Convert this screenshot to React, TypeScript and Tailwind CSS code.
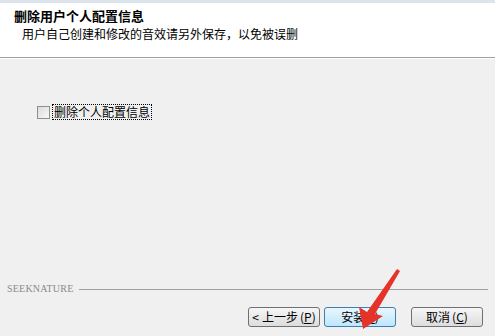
import React from 'react';

const cjk = { fontFamily: '"Noto Sans CJK SC", "Liberation Sans", sans-serif' };

function WizardButton({ label, hotkey, prefix, primary }: { label: string; hotkey: string; prefix?: string; primary?: boolean }) {
  return (
    <button
      className={
        primary
          ? 'flex h-[20px] w-[72px] items-center justify-center rounded-[3px] border border-[#3c7fb1] bg-gradient-to-b from-[#eaf6fd] to-[#bee6fd] text-[12px] text-black'
          : 'flex h-[20px] w-[72px] items-center justify-center rounded-[3px] border border-[#707070] bg-gradient-to-b from-[#f6f6f6] to-[#dddddd] text-[12px] text-black'
      }
      style={cjk}
    >
      {prefix && <span className="mr-[3px]">{prefix}</span>}
      <span>{label}</span>
      <span className="ml-[2px]">
        (<span className="underline">{hotkey}</span>)
      </span>
    </button>
  );
}

export default function App() {
  return (
    <div className="relative flex h-[336px] w-[495px] flex-col overflow-hidden bg-[#f0f0f0]" style={cjk}>
      <div className="h-[3px] bg-[#dce5ee]" />
      <header className="flex h-[54px] flex-col bg-white pl-[14px] pt-[5px]">
        <p className="text-[13px] font-bold leading-[16px] text-black">删除用户个人配置信息</p>
        <p className="ml-[8px] mt-[2px] text-[12px] leading-[16px] text-black">用户自己创建和修改的音效请另外保存，以免被误删</p>
      </header>
      <div className="h-px bg-[#a0a0a0]" />
      <div className="h-px bg-white" />

      <main className="flex-1 pl-[37px] pt-[45px]">
        <label className="flex items-center gap-[2px]">
          <span className="h-[13px] w-[13px] border border-[#8e8f8f] bg-gradient-to-br from-[#dcdcdc] to-[#f8f8f8]" />
          <span className="border border-dotted border-black px-[1px] text-[12px] leading-[14px] text-black">删除个人配置信息</span>
        </label>
      </main>

      <div className="flex items-center pl-[7px] pr-[7px]">
        <span className="text-[10px] leading-[12px] tracking-[0.2px] text-[#8a8a8a]" style={{ fontFamily: '"Liberation Serif", serif' }}>
          SEEKNATURE
        </span>
        <div className="ml-[6px] h-px flex-1 bg-[#a0a0a0]" />
      </div>

      <footer className="flex justify-end pb-[9px] pr-[12px] pt-[12px]">
        <WizardButton prefix="<" label="上一步" hotkey="P" />
        <div className="ml-[4px]">
          <WizardButton label="安装" hotkey="I" primary />
        </div>
        <div className="ml-[15px]">
          <WizardButton label="取消" hotkey="C" />
        </div>
      </footer>

      <svg className="absolute left-0 top-0" width="495" height="336" viewBox="0 0 495 336">
        <polygon points="397,269 400,271 375,314 383,316 363,329 359,307 367,312" fill="#e5332a" />
      </svg>
    </div>
  );
}
